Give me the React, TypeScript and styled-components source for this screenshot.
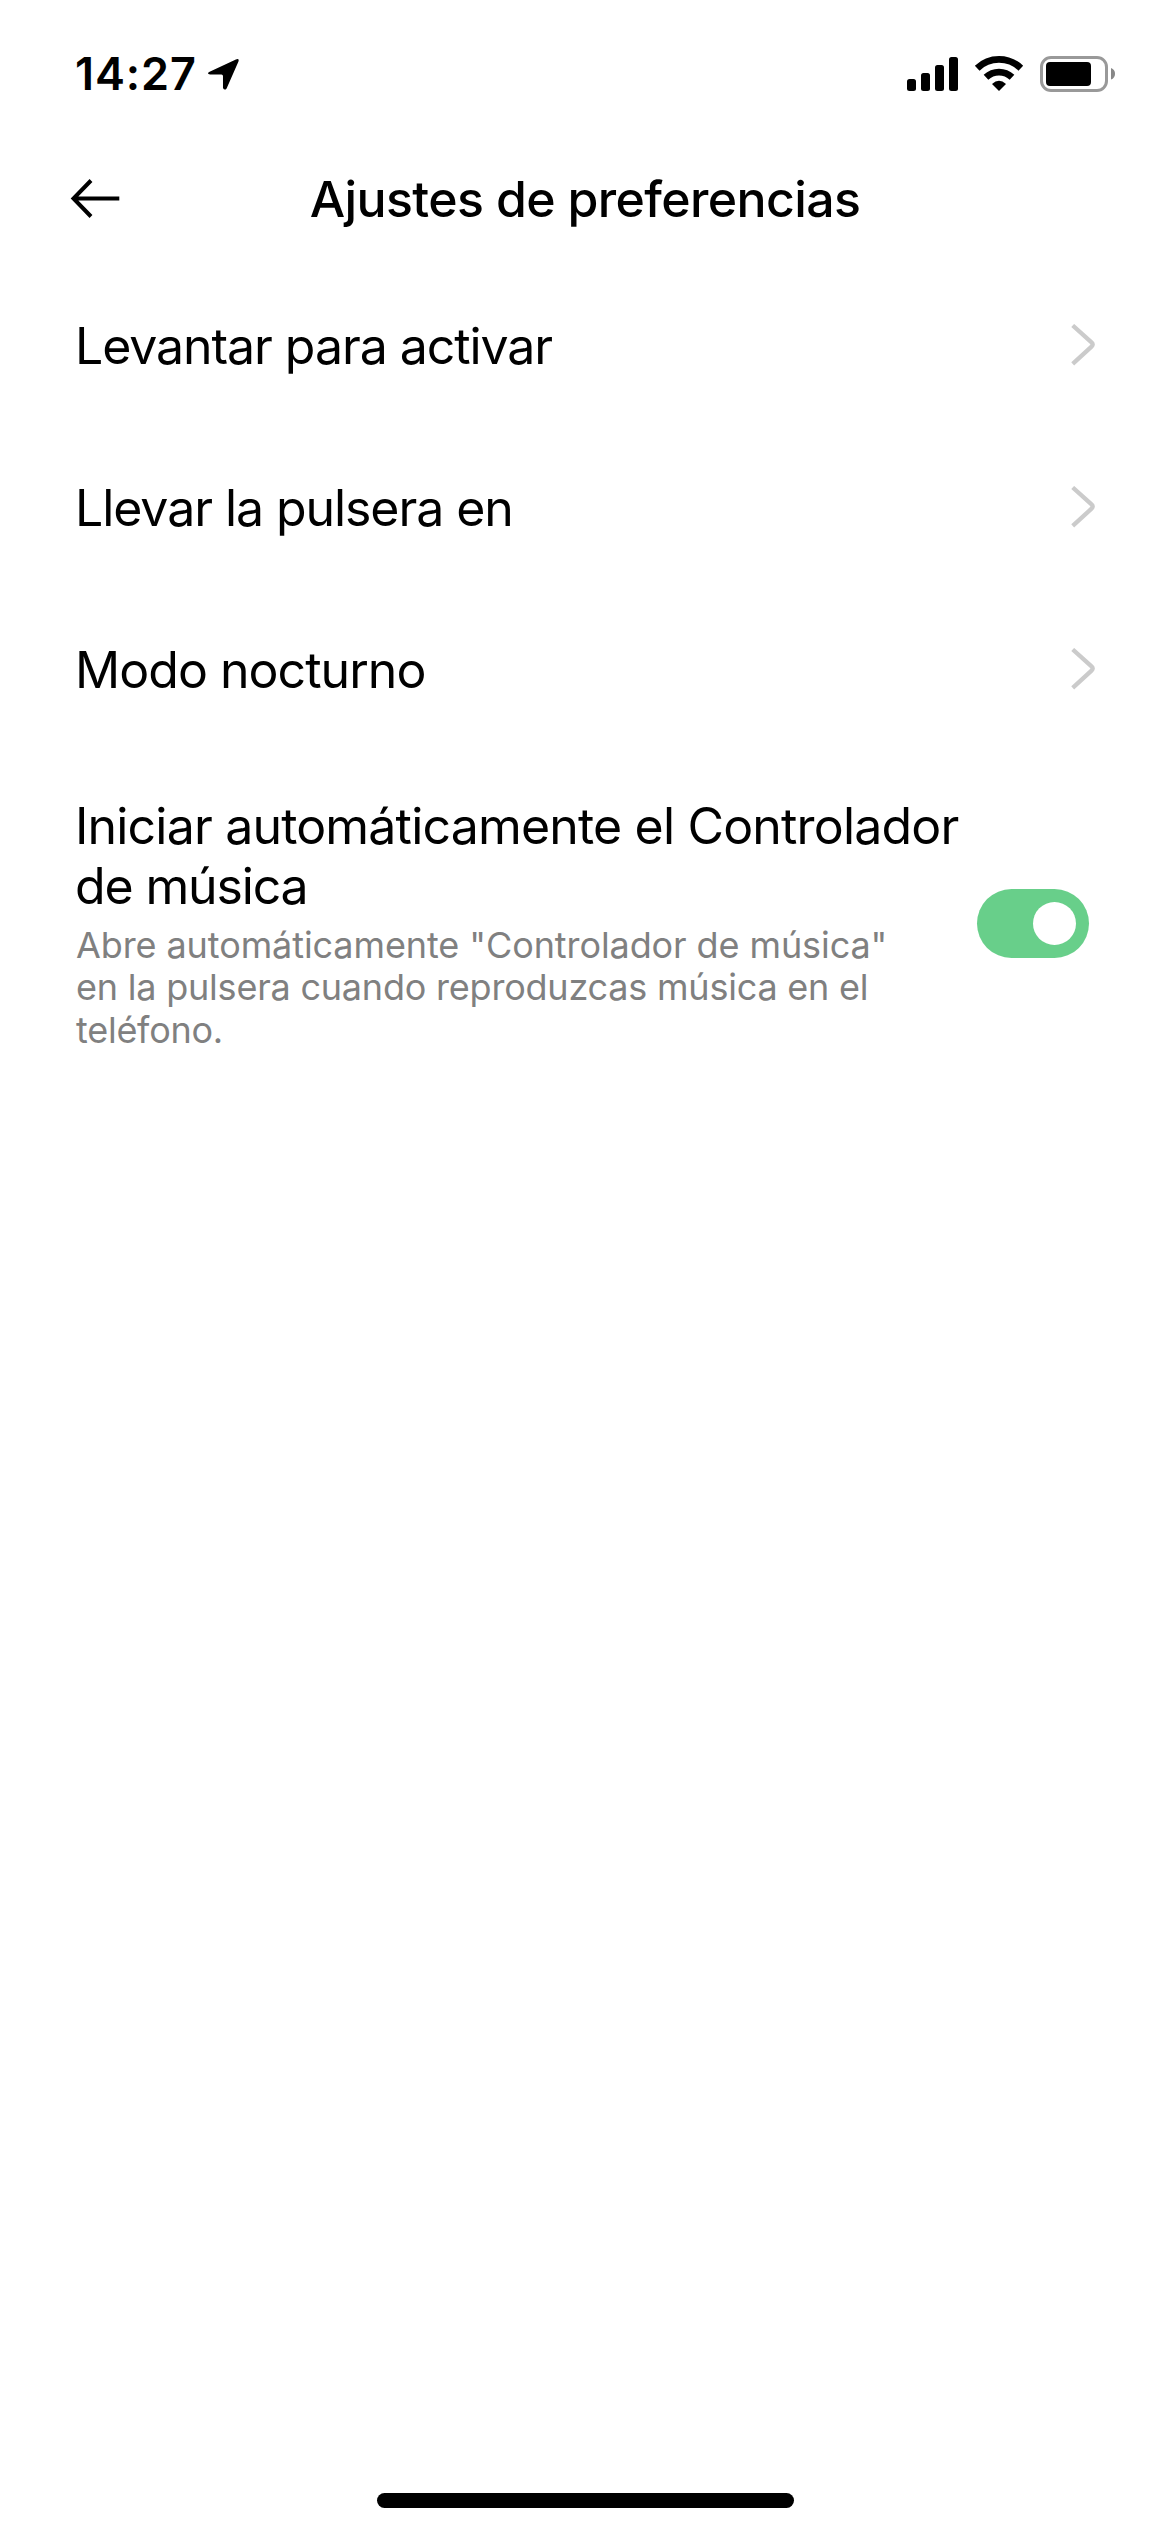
import React from "react";
import styled, { createGlobalStyle } from "styled-components";

const GlobalStyle = createGlobalStyle`
  * { box-sizing: border-box; }
  body { margin: 0; background: #fff; }
`;

const Screen = styled.div`
  display: flex;
  flex-direction: column;
  width: 1170px;
  height: 2532px;
  background: #fff;
  color: #000;
  font-family: Inter, "Liberation Sans", sans-serif;
`;

const StatusBar = styled.header`
  display: flex;
  align-items: flex-start;
  justify-content: space-between;
  height: 141px;
  padding: 44px 54px 0 75px;
`;

const Clock = styled.div`
  display: flex;
  align-items: center;
  height: 60px;
  gap: 10px;
`;

const Time = styled.span`
  font-size: 45px;
  line-height: 60px;
  font-weight: 600;
  letter-spacing: 0.9px;
`;

const StatusIcons = styled.div`
  display: flex;
  align-items: center;
  height: 60px;
`;

const NavBar = styled.nav`
  display: grid;
  grid-template-columns: 120px 1fr 120px;
  align-items: center;
  height: 124px;
  padding-bottom: 9px;
`;

const BackButton = styled.button`
  display: flex;
  padding: 0 0 0 70px;
  border: 0;
  background: none;
`;

const Title = styled.h1`
  margin: 0;
  text-align: center;
  font-size: 50px;
  line-height: 60px;
  font-weight: 500;
  letter-spacing: -0.64px;
  white-space: nowrap;
`;

const List = styled.main`
  display: flex;
  flex-direction: column;
  flex: 1;
`;

const Row = styled.div`
  display: flex;
  align-items: center;
  justify-content: space-between;
  height: 162px;
  padding: 0 74px 0 75px;
`;

const ToggleRow = styled(Row)`
  height: 345px;
  padding-right: 81px;
`;

const RowText = styled.div`
  display: flex;
  flex-direction: column;
  flex: 1;
  min-width: 0;
`;

const Label = styled.span<{ $spacing: number }>`
  font-size: 50px;
  line-height: 60px;
  letter-spacing: ${(p) => p.$spacing}px;
  white-space: nowrap;
`;

const Description = styled.p`
  display: flex;
  flex-direction: column;
  margin: 8px 0 0;
  padding-left: 1px;
  font-size: 36px;
  line-height: 42.5px;
  color: #808080;
  white-space: nowrap;
`;

const DescriptionLine = styled.span<{ $spacing: number }>`
  letter-spacing: ${(p) => p.$spacing}px;
`;

const Switch = styled.button`
  display: flex;
  align-items: center;
  justify-content: flex-end;
  flex-shrink: 0;
  width: 112px;
  height: 69px;
  padding: 0 13px;
  border: 0;
  border-radius: 35px;
  background: #68cf8a;
`;

const Knob = styled.span`
  width: 43px;
  height: 43px;
  border-radius: 50%;
  background: #fff;
`;

const HomeBar = styled.footer`
  align-self: center;
  width: 417px;
  height: 15px;
  margin-bottom: 24px;
  border-radius: 8px;
  background: #000;
`;

const Chevron = () => (
  <svg width="26" height="44" viewBox="0 0 26 44" fill="none">
    <path d="M2.700 1.500L21.500 18.300Q23.700 20.500 21.500 22.700L2.700 39.800" stroke="#cbcbcb" strokeWidth="4.300" />
  </svg>
);

const LocationArrow = () => (
  <svg width="33" height="33" viewBox="0 0 32 32">
    <path d="M2 13.500L28 1.500Q31.500 0 30.500 3.500L19 29.500Q17 32 15.500 29V17.500Q15.500 16 14 16H3Q-.500 15.500 2 13.500Z" />
  </svg>
);

const SignalWifiBattery = () => (
  <svg width="210" height="40" viewBox="906 54 210 40">
    <rect x="907" y="79" width="9" height="12" rx="2.500" />
    <rect x="921" y="73" width="9" height="18" rx="2.500" />
    <rect x="935" y="65" width="9" height="26" rx="2.500" />
    <rect x="949" y="57" width="9" height="34" rx="2.500" />
    <g fill="none" stroke="#000" strokeWidth="6.800">
      <path d="M977.200 68.200A31.500 31.500 0 0 1 1020.800 68.200" />
      <path d="M986 77.200A19 19 0 0 1 1012 77.200" />
    </g>
    <path d="M999 91L992 84Q999 77.500 1006 84Z" />
    <rect x="1041.500" y="57.500" width="65" height="33" rx="9.500" fill="none" stroke="#999" strokeWidth="3" />
    <rect x="1046" y="62" width="45" height="24" rx="4" />
    <path d="M1111 68V79.500Q1115 78 1115 73.700Q1115 69.500 1111 68Z" fill="#888" />
  </svg>
);

const options = [
  { label: "Levantar para activar", spacing: -1.07 },
  { label: "Llevar la pulsera en", spacing: -1.07 },
  { label: "Modo nocturno", spacing: -0.96 },
];

export default function App() {
  return (
    <Screen>
      <GlobalStyle />
      <StatusBar>
        <Clock>
          <Time>14:27</Time>
          <LocationArrow />
        </Clock>
        <StatusIcons>
          <SignalWifiBattery />
        </StatusIcons>
      </StatusBar>
      <NavBar>
        <BackButton aria-label="Volver">
          <svg width="50" height="40" viewBox="70 178.500 50 40" fill="none" stroke="#000" strokeWidth="4">
            <path d="M91 180L73.500 198L91 216M73 198H119.300" />
          </svg>
        </BackButton>
        <Title>Ajustes de preferencias</Title>
      </NavBar>
      <List>
        {options.map((o) => (
          <Row key={o.label}>
            <Label $spacing={o.spacing}>{o.label}</Label>
            <Chevron />
          </Row>
        ))}
        <ToggleRow>
          <RowText>
            <Label $spacing={-0.82}>Iniciar automáticamente el Controlador</Label>
            <Label $spacing={-1.15}>de música</Label>
            <Description>
              <DescriptionLine $spacing={-0.09}>Abre automáticamente "Controlador de música"</DescriptionLine>
              <DescriptionLine $spacing={-0.21}>en la pulsera cuando reproduzcas música en el</DescriptionLine>
              <DescriptionLine $spacing={-0.25}>teléfono.</DescriptionLine>
            </Description>
          </RowText>
          <Switch role="switch" aria-checked="true"><Knob /></Switch>
        </ToggleRow>
      </List>
      <HomeBar />
    </Screen>
  );
}
